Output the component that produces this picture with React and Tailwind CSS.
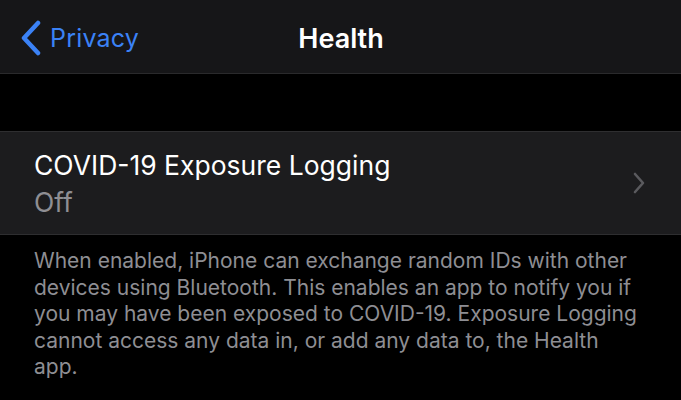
export default function App() {
  return (
    <div
      className="w-[681px] h-[400px] bg-black overflow-hidden"
      style={{ fontFamily: "Inter, 'Noto Sans', sans-serif" }}
    >
      {/* Nav bar */}
      <div className="h-[74px] bg-[#161618] border-b border-[#2a2a2c] flex items-center relative pt-[3px]">
        <div className="flex items-center pl-[20px] text-[#3b82f6]">
          <svg width="22" height="36" viewBox="0 0 22 36" fill="none">
            <path
              d="M18 3 L4 18 L18 33"
              stroke="#3b82f6"
              strokeWidth="4.5"
              strokeLinecap="round"
              strokeLinejoin="round"
            />
          </svg>
          <span className="ml-[8px] text-[25px] leading-none tracking-[0.2px]">Privacy</span>
        </div>
        <div className="absolute left-0 right-0 text-center text-white text-[27px] font-semibold leading-none pointer-events-none pl-[1px]">
          Health
        </div>
      </div>

      {/* Spacer */}
      <div className="h-[57px]" />

      {/* Cell */}
      <div className="h-[104px] bg-[#1c1c1e] border-y border-[#2e2e30] flex items-center pl-[34px] pr-[36px]">
        <div className="flex-1">
          <div className="text-white text-[26.5px] leading-[30px]">COVID-19 Exposure Logging</div>
          <div className="text-[#8e8e93] text-[26.5px] leading-[30px] mt-[7px]">Off</div>
        </div>
        <svg width="12" height="22" viewBox="0 0 12 22" fill="none">
          <path
            d="M2 2 L10 11 L2 20"
            stroke="#5a5a5e"
            strokeWidth="2.6"
            strokeLinecap="round"
            strokeLinejoin="round"
          />
        </svg>
      </div>

      {/* Footer */}
      <div className="pl-[34px] pr-[40px] pt-[13px] text-[#8e8e93] text-[21px] leading-[26.6px]">
        When enabled, iPhone can exchange random IDs with other devices using Bluetooth. This enables an
        app to notify you if you may have been exposed to COVID-19. Exposure Logging cannot access any data
        in, or add any data to, the Health app.
      </div>
    </div>
  );
}
